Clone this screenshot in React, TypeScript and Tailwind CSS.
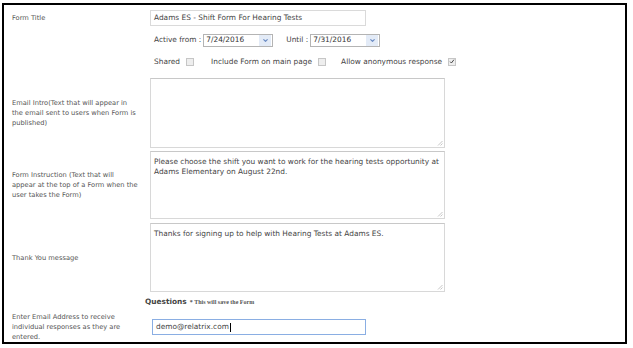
import { ChevronDown } from "lucide-react"

const label = "text-[6.7px] leading-[10px] text-[#555]"
const field = "text-[7.4px] text-[#444]"

function Select({ value }: { value: string }) {
  return (
    <div className="flex h-[13px] w-[70px] items-center border border-[#b4b4b4] bg-white">
      <span className="flex-1 pl-[2px] text-[7.4px] text-[#333]">{value}</span>
      <span className="mr-[1px] flex h-[11px] w-[12px] items-center justify-center bg-[#e3ebf7]">
        <ChevronDown className="h-[7px] w-[7px] text-[#6b8cc4]" strokeWidth={4} />
      </span>
    </div>
  )
}

function Check({ checked = false }: { checked?: boolean }) {
  return (
    <span className="inline-flex h-[8px] w-[8px] items-center justify-center border border-[#c6c6c6] bg-[#eeeeee]">
      {checked && (
        <svg viewBox="0 0 8 8" className="h-[7px] w-[7px]">
          <path d="M1.5 4.2 L3.2 6 L6.6 1.6" fill="none" stroke="#444" strokeWidth="1.3" />
        </svg>
      )}
    </span>
  )
}

function Area({ text }: { text?: string }) {
  return (
    <div className="relative h-full w-[295px] border border-[#d8d8d8] border-t-[#c8c8c8] bg-white px-[3px] pt-[5px]">
      <p className={`${field} leading-[10px]`}>{text}</p>
      <svg viewBox="0 0 6 6" className="absolute bottom-[1px] right-[1px] h-[6px] w-[6px]">
        <path d="M5.5 1 L1 5.5 M5.5 3.5 L3.5 5.5" stroke="#b8b8b8" strokeWidth="0.8" />
      </svg>
    </div>
  )
}

function Row({ name, h, children }: { name?: React.ReactNode; h: string; children: React.ReactNode }) {
  return (
    <div className={`flex items-center ${h}`}>
      <div className={`w-[138px] shrink-0 whitespace-nowrap ${label}`}>{name}</div>
      <div className="flex h-full flex-1 items-center">{children}</div>
    </div>
  )
}

export default function App() {
  return (
    <div className="h-[348px] w-[633px] bg-white pl-[2px] pt-[3px]" style={{ fontFamily: '"DejaVu Sans", Verdana, sans-serif' }}>
      <div className="flex h-[341px] w-[625px] flex-col border-2 border-black pl-[8px] pt-[3px]">
        <Row name="Form Title" h="h-[20px]">
          <div className="flex h-[16px] w-[216px] items-center border border-[#dadada] pl-[3px]">
            <span className={field}>Adams ES - Shift Form For Hearing Tests</span>
          </div>
        </Row>

        <Row h="h-[22px] mt-[1px]">
          <div className={`flex items-center pl-[4px] ${field}`}>
            <span className="mr-[2px]">Active from :</span>
            <Select value="7/24/2016" />
            <span className="ml-[13px] mr-[2px]">Until :</span>
            <Select value="7/31/2016" />
          </div>
        </Row>

        <Row h="h-[22px]">
          <div className={`flex items-center pl-[4px] ${field}`}>
            <span className="mr-[6px]">Shared</span>
            <Check />
            <span className="ml-[17px] mr-[6px]">Include Form on main page</span>
            <Check />
            <span className="ml-[15px] mr-[6px]">Allow anonymous response</span>
            <Check checked />
          </div>
        </Row>

        <div className="h-[5px]" />

        <Row
          name={<>Email Intro(Text that will appear in<br />the email sent to users when Form is<br />published)</>}
          h="h-[70px]"
        >
          <Area />
        </Row>

        <div className="h-[3px]" />

        <Row
          name={<>Form Instruction (Text that will<br />appear at the top of a Form when the<br />user takes the Form)</>}
          h="h-[68px]"
        >
          <Area text="Please choose the shift you want to work for the hearing tests opportunity at Adams Elementary on August 22nd." />
        </Row>

        <div className="h-[4px]" />

        <Row name="Thank You message" h="h-[69px]">
          <Area text="Thanks for signing up to help with Hearing Tests at Adams ES." />
        </Row>

        <div className="flex h-[20px] items-center pl-[133px]">
          <span className="text-[7.4px] font-bold text-[#444]">Questions</span>
          <span className="ml-[3px] text-[6px] font-bold text-[#555]" style={{ fontFamily: '"Liberation Serif", serif' }}>
            * This will save the Form
          </span>
        </div>

        <Row
          name={<>Enter Email Address to receive<br />individual responses as they are<br />entered.</>}
          h="h-[30px]"
        >
          <div className="ml-[2px] flex h-[16px] w-[214px] items-center border border-[#8aaee3] pl-[3px]">
            <span className={field}>demo@relatrix.com</span>
            <span className="ml-[1px] h-[9px] w-px bg-black" />
          </div>
        </Row>
      </div>
    </div>
  )
}
